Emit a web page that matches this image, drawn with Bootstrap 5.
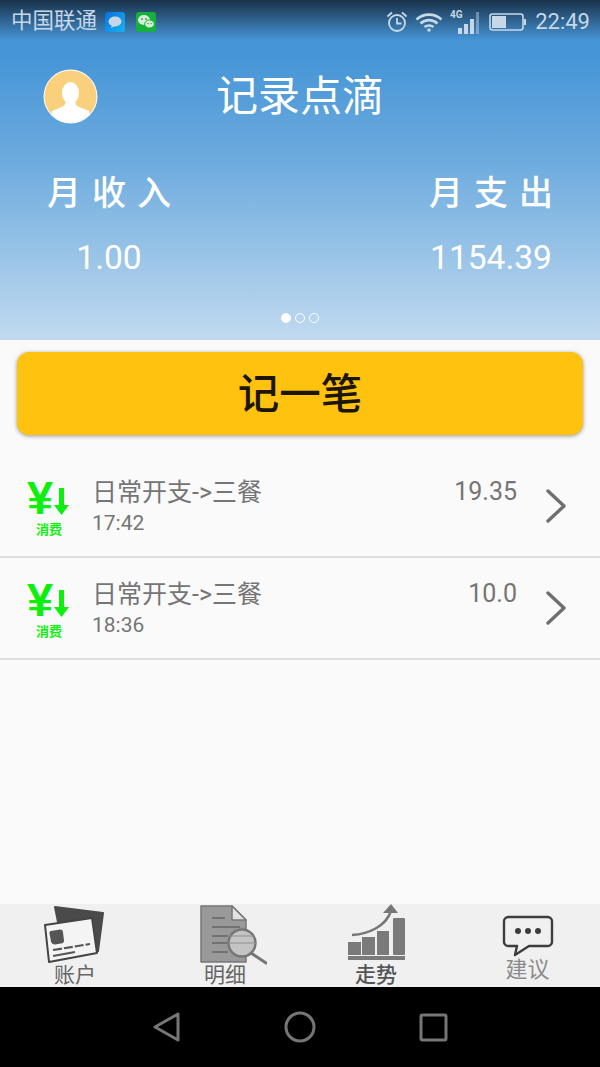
<!DOCTYPE html>
<html lang="zh">
<head>
  <meta charset="UTF-8">
  <title>记录点滴</title>
  <meta name="viewport" content="width=device-width, initial-scale=1.0">
  <link href="https://cdn.jsdelivr.net/npm/bootstrap@5.3.0/dist/css/bootstrap.min.css" rel="stylesheet">
  <style>
    html, body { height: 1067px; overflow: hidden; }
    body { font-family: Roboto, "Noto Sans CJK SC", sans-serif; background: #fafafa; }
    .screen { height: 1067px; }
    .hero { height: 340px; color: #fff; background: linear-gradient(#4391d4 0, #4796d7 60px, #6dabde 160px, #c1daf0 340px); position: relative; }
    .status-shade { position: absolute; left: 0; right: 0; top: 0; height: 40px; background: linear-gradient(#1a3249, rgba(26,50,73,0)); }
    .status-row { height: 40px; padding: 3px 10px 0 11px; position: relative; color: #c6d8e8; }
    .carrier { font-size: 21.5px; margin-right: 8px; }
    .app-dot { margin-right: 11px; }
    .sys-icons { gap: 7px; }
    .clock { font-size: 22px; margin-left: 1px; }
    .title-row { height: 56px; margin-top: 29px; position: relative; }
    .avatar-svg { position: absolute; left: 43px; top: 0; }
    .app-title { font-size: 42px; line-height: 56px; font-weight: 400; margin: 0; }
    .stat-row { margin-top: 43px; }
    .stat-col { width: 218px; }
    .stat-name { font-size: 34px; line-height: 50px; letter-spacing: 11px; padding-left: 11px; font-weight: 500; }
    .stat-num { font-size: 33.5px; line-height: 40px; margin-top: 20px; font-weight: 400; }
    .dots { position: absolute; left: 281px; top: 313px; gap: 4px; }
    .dot-item { width: 10px; height: 10px; border-radius: 50%; border: 1px solid #fff; }
    .dot-on { background: #fff; }
    .write-btn { display: block; width: 566px; height: 83px; margin: 12px auto 0; padding-top: 10px; background: #ffc30f; border: 0; border-radius: 12px; font-size: 41.5px; font-weight: 500; color: #1c1500; box-shadow: 0 1px 4px rgba(0,0,0,.4); }
    .write-btn:hover { background: #ffc30f; color: #1c1500; }
    .rec-list { margin-top: 21px; }
    .rec-list > .rec-row.rec-row { border-bottom-width: 2px; }
    .rec-row { height: 102px; background: transparent; border-color: #dedede; padding: 0 0 0 27px; }
    .rec-mark { width: 44px; margin-right: 21px; color: #0df00d; }
    .yen-wrap { height: 44px; }
    .yen { font-family: "Liberation Sans", sans-serif; font-weight: 700; font-size: 47px; line-height: 44px; width: 27px; }
    .mark-txt { font-size: 13px; line-height: 14px; font-weight: 700; white-space: nowrap; margin-top: 3px; margin-left: 9px; }
    .rec-text { padding-top: 2px; }
    .rec-name { font-size: 25px; line-height: 32px; color: #757575; }
    .rec-time { font-size: 21px; line-height: 28px; color: #757575; }
    .rec-amount { font-size: 25px; line-height: 32px; color: #757575; margin-right: 29px; align-self: flex-start; margin-top: 20px; }
    .rec-go { margin-right: 34px; }
    .tabs { height: 83px; background: #f0f0f0; overflow: hidden; }
    .tab-item { text-align: center; padding: 0; }
    .tab-item svg { display: block; margin: 0 auto; }
    .tab-label { font-size: 21px; line-height: 22px; color: #666; margin-top: -1px; }
    .tab-strong { color: #555; font-weight: 500; margin-top: 1px; padding-left: 2px; }
    .tab-soft { color: #8b8b8b; font-size: 22px; margin-top: -6px; }
    .tab-shift { padding-left: 5px; }
    .sys-bar { height: 80px; background: #000; }
  </style>
</head>
<body>
  <div class="screen d-flex flex-column">
    <div class="hero flex-shrink-0">
      <div class="status-shade"></div>
      <div class="status-row d-flex align-items-center">
        <span class="carrier">中国联通</span>
        <svg width="20" height="20" viewBox="0 0 20 20" class="app-dot">
          <defs><linearGradient id="msgBlue" x1="0" y1="0" x2="1" y2="1"><stop offset="0" stop-color="#0a6fe0"/><stop offset="1" stop-color="#18b4ee"/></linearGradient></defs>
          <rect width="20" height="20" rx="3" fill="url(#msgBlue)"/>
          <ellipse cx="10" cy="9.500" rx="6.500" ry="5" fill="#c6d8e8"/>
          <path d="M7 13l-1 3 4-2z" fill="#c6d8e8"/>
        </svg>
        <svg width="20" height="20" viewBox="0 0 20 20">
          <rect width="20" height="20" rx="3" fill="#16b13d"/>
          <ellipse cx="8" cy="8" rx="6" ry="5" fill="#d8ecd8"/>
          <ellipse cx="13.500" cy="12" rx="4.800" ry="4" fill="#d8ecd8" stroke="#16b13d"/>
          <circle cx="6" cy="7" r=".9" fill="#16b13d"/><circle cx="10" cy="7" r=".9" fill="#16b13d"/>
          <circle cx="12" cy="11.500" r=".7" fill="#16b13d"/><circle cx="15" cy="11.500" r=".7" fill="#16b13d"/>
        </svg>
        <span class="sys-icons ms-auto d-flex align-items-center">
          <svg width="22" height="23" viewBox="0 0 22 23" fill="none" stroke="#c6d8e8" stroke-width="1.800">
            <circle cx="11" cy="13" r="8"/>
            <path d="M11 8V13.500H15.500M1.500 6.500l4.500-4M20.500 6.500l-4.500-4"/>
          </svg>
          <svg width="28" height="20" viewBox="0 0 28 20" fill="none" stroke="#c6d8e8" stroke-width="2.600">
            <path d="M1.500 7.500C8.500 1 19.500 1 26.500 7.500M5.500 11.500C10.500 7 17.500 7 22.500 11.500M9.500 15C12 13 16 13 18.500 15"/>
            <circle cx="14" cy="18" r="1.800" fill="#c6d8e8" stroke="none"/>
          </svg>
          <svg width="32" height="26" viewBox="0 0 32 26">
            <text x="0" y="9" font-size="10" font-weight="700" fill="#c6d8e8" font-family="Roboto">4G</text>
            <rect x="8" y="19" width="4" height="6" fill="#c6d8e8"/>
            <rect x="14" y="15" width="4" height="10" fill="#c6d8e8"/>
            <rect x="20" y="10" width="4" height="15" fill="#c6d8e8"/>
            <rect x="26" y="3" width="3" height="22" fill="#c6d8e8" opacity=".45"/>
          </svg>
          <svg width="38" height="18" viewBox="0 0 38 18">
            <rect x="1" y="1" width="33" height="16" rx="2.500" fill="none" stroke="#c6d8e8" stroke-width="1.600"/>
            <rect x="3" y="3" width="14" height="12" fill="#c6d8e8"/>
            <rect x="35" y="6" width="2" height="6" fill="#c6d8e8"/>
          </svg>
          <span class="clock">22:49</span>
        </span>
      </div>
      <div class="title-row text-center">
        <svg class="avatar-svg" width="55" height="55" viewBox="0 0 55 55">
          <defs><clipPath id="faceClip"><circle cx="27.500" cy="27.500" r="26"/></clipPath></defs>
          <circle cx="27.500" cy="27.500" r="27" fill="#fff"/>
          <circle cx="27.500" cy="27.500" r="26" fill="#fbd07c"/>
          <g clip-path="url(#faceClip)" fill="#fff">
            <ellipse cx="27.500" cy="24" rx="8.500" ry="11"/>
            <path d="M23 33h9l2 4 12 5 3 13H6l3-13 12-5z"/>
          </g>
        </svg>
        <h1 class="app-title">记录点滴</h1>
      </div>
      <div class="stat-row d-flex justify-content-between text-center">
        <div class="stat-col">
          <div class="stat-name">月收入</div>
          <div class="stat-num">1.00</div>
        </div>
        <div class="stat-col">
          <div class="stat-name">月支出</div>
          <div class="stat-num">1154.39</div>
        </div>
      </div>
      <div class="dots d-flex">
        <span class="dot-item dot-on"></span><span class="dot-item"></span><span class="dot-item"></span>
      </div>
    </div>

    <button type="button" class="btn write-btn flex-shrink-0">记一笔</button>

    <div class="rec-list list-group list-group-flush flex-grow-1">
      <div class="list-group-item rec-row d-flex align-items-center">
        <div class="rec-mark">
          <div class="yen-wrap d-flex">
            <span class="yen">¥</span>
            <svg width="15" height="44" viewBox="0 0 15 44"><path d="M5 12h5v17h5l-7.500 10L0 29h5z" fill="currentColor"/></svg>
          </div>
          <div class="mark-txt">消费</div>
        </div>
        <div class="rec-text flex-grow-1">
          <div class="rec-name">日常开支-&gt;三餐</div>
          <div class="rec-time">17:42</div>
        </div>
        <div class="rec-amount">19.35</div>
        <svg class="rec-go" width="20" height="34" viewBox="0 0 20 34" fill="none" stroke="#6f6f6f" stroke-width="3.400" stroke-linecap="round" stroke-linejoin="round"><path d="M2 2l16 15L2 32"/></svg>
      </div>
      <div class="list-group-item rec-row d-flex align-items-center">
        <div class="rec-mark">
          <div class="yen-wrap d-flex">
            <span class="yen">¥</span>
            <svg width="15" height="44" viewBox="0 0 15 44"><path d="M5 12h5v17h5l-7.500 10L0 29h5z" fill="currentColor"/></svg>
          </div>
          <div class="mark-txt">消费</div>
        </div>
        <div class="rec-text flex-grow-1">
          <div class="rec-name">日常开支-&gt;三餐</div>
          <div class="rec-time">18:36</div>
        </div>
        <div class="rec-amount">10.0</div>
        <svg class="rec-go" width="20" height="34" viewBox="0 0 20 34" fill="none" stroke="#6f6f6f" stroke-width="3.400" stroke-linecap="round" stroke-linejoin="round"><path d="M2 2l16 15L2 32"/></svg>
      </div>
    </div>

    <div class="tabs row g-0 flex-shrink-0">
      <div class="col-3 tab-item">
        <svg width="64" height="61" viewBox="0 0 64 61">
          <path d="M12 3l48 6-5 38-5-1-2-33-33 5z" fill="#4a4a4a" stroke="#4a4a4a" stroke-width="2" stroke-linejoin="round"/>
          <path d="M2 21l47-7 5 35-48 9z" fill="#f4f4f4" stroke="#444" stroke-width="2" stroke-linejoin="round"/>
          <path d="M8 27l9-1.500c2 0 3 1 3 3l1 8c0 2-1 3-3 3l-6 1c-2 0-3.500-1-4-3l-1.500-8c0-2 .5-2.500 1.500-2.500z" fill="#555"/>
          <path d="M10 46l37-6" stroke="#555" stroke-width="2.200" stroke-dasharray="9 2"/>
          <path d="M10 52l22-4" stroke="#555" stroke-width="2.200"/>
        </svg>
        <div class="tab-label">账户</div>
      </div>
      <div class="col-3 tab-item">
        <svg width="84" height="61" viewBox="0 0 84 61">
          <path d="M18 2h31l14 14v42H18z" fill="#999" stroke="#777" stroke-width="1.500" stroke-linejoin="round"/>
          <path d="M49 2v14h14z" fill="#e2e2e2" stroke="#777" stroke-width="1.500" stroke-linejoin="round"/>
          <path d="M29 14h13M29 23h28M29 32h16M29 39h16M29 48h16" stroke="#666" stroke-width="1.500"/>
          <circle cx="59" cy="39" r="13.500" fill="#c4c4c4" stroke="#777" stroke-width="2.500"/>
          <path d="M45 39h28M47 32h24" stroke="#8d8d8d" stroke-width="1.200"/>
          <path d="M68 49l15 10" stroke="#777" stroke-width="3" stroke-linecap="round"/>
        </svg>
        <div class="tab-label">明细</div>
      </div>
      <div class="col-3 tab-item">
        <svg width="62" height="59" viewBox="0 0 62 59">
          <rect x="4" y="38" width="13" height="13" fill="#7a7a7a"/>
          <rect x="18" y="33" width="13" height="18" fill="#7a7a7a"/>
          <rect x="33" y="27" width="12" height="24" fill="#7a7a7a"/>
          <rect x="49" y="14" width="12" height="37" rx="1" fill="#7a7a7a"/>
          <rect x="4" y="52" width="57" height="4" fill="#7a7a7a"/>
          <path d="M8 31C25 30 42 22 47 7" fill="none" stroke="#777" stroke-width="2.500"/>
          <path d="M39 9L47 0l7 9z" fill="#777"/>
        </svg>
        <div class="tab-label tab-strong">走势</div>
      </div>
      <div class="col-3 tab-item tab-shift">
        <svg width="52" height="61" viewBox="0 0 52 61">
          <path d="M6 13h40c2 0 4 2 4 4v21c0 2-2 4-4 4H27l-14 9 2-9H6c-2 0-4-2-4-4V17c0-2 2-4 4-4z" fill="none" stroke="#3d3d3d" stroke-width="2.400" stroke-linejoin="round"/>
          <circle cx="16" cy="27" r="3" fill="#3d3d3d"/>
          <circle cx="26" cy="27" r="3" fill="#3d3d3d"/>
          <circle cx="36" cy="27" r="3" fill="#3d3d3d"/>
        </svg>
        <div class="tab-label tab-soft">建议</div>
      </div>
    </div>

    <div class="sys-bar flex-shrink-0 d-flex align-items-center justify-content-center">
      <svg width="300" height="40" viewBox="0 0 300 40" fill="none" stroke="#767676" stroke-width="3" stroke-linejoin="round">
        <path d="M5 20L28 7v26z"/>
        <circle cx="150" cy="20" r="14"/>
        <rect x="271" y="8" width="25" height="25" rx="1.500"/>
      </svg>
    </div>
  </div>
  <script src="https://cdn.jsdelivr.net/npm/bootstrap@5.3.0/dist/js/bootstrap.bundle.min.js"></script>
</body>
</html>
